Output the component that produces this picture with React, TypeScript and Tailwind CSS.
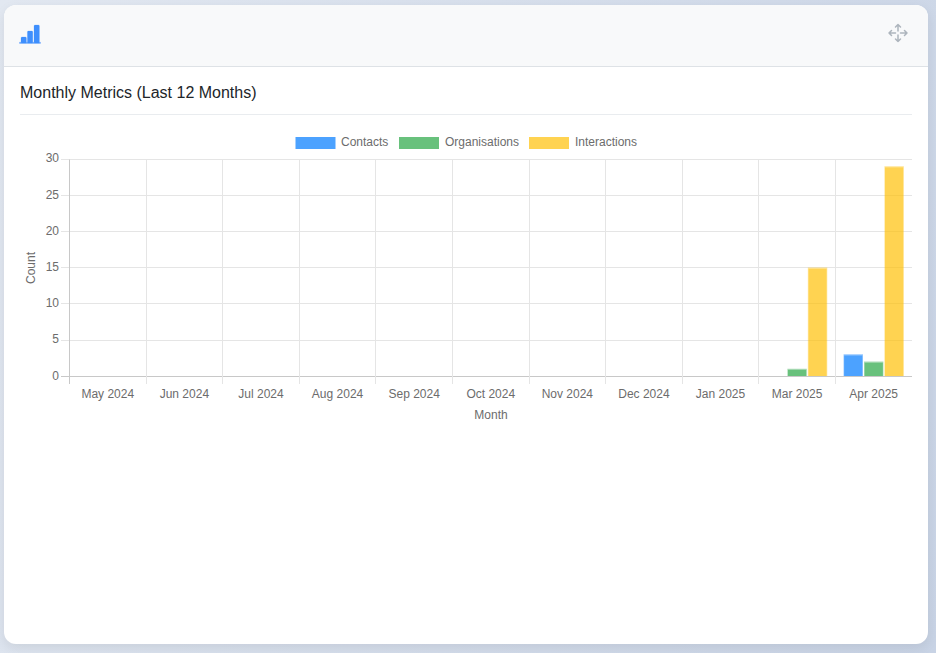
const months = ['May 2024', 'Jun 2024', 'Jul 2024', 'Aug 2024', 'Sep 2024', 'Oct 2024', 'Nov 2024', 'Dec 2024', 'Jan 2025', 'Mar 2025', 'Apr 2025'];
const series = [
  { name: 'Contacts', fill: 'rgba(0,123,255,0.7)', edge: 'rgba(0,123,255,0.45)', values: [0, 0, 0, 0, 0, 0, 0, 0, 0, 0, 3] },
  { name: 'Organisations', fill: 'rgba(40,167,69,0.7)', edge: 'rgba(40,167,69,0.42)', values: [0, 0, 0, 0, 0, 0, 0, 0, 0, 1, 2] },
  { name: 'Interactions', fill: 'rgba(255,193,7,0.7)', edge: 'rgba(255,193,7,0.42)', values: [0, 0, 0, 0, 0, 0, 0, 0, 0, 15, 29] },
];

const left = 69.5;
const right = 912;
const top = 159.5;
const bottom = 376.5;
const step = (right - left) / months.length;
const yFor = (v: number) => bottom - ((bottom - top) * v) / 30;
// gridlines snap to whole pixels a little above the true value
const gridY = (v: number) => Math.floor(top + (36.1 * (30 - v)) / 5) + 0.5;
const labelColor = '#6c6c6c';
const legend = [
  { x: 295.5, tx: 341 },
  { x: 399, tx: 445 },
  { x: 529, tx: 575 },
];

function MetricsChart() {
  return (
    <svg width="936" height="320" viewBox="0 120 936 320" className="-ml-5 mt-[5px] block font-['Liberation_Sans',sans-serif]">
      {series.map((s, i) => (
        <g key={s.name}>
          <rect x={legend[i].x} y={137} width={40} height={12} fill={s.fill} />
          <text x={legend[i].tx} y={146} fontSize={12} fill={labelColor}>{s.name}</text>
        </g>
      ))}
      {[0, 5, 10, 15, 20, 25, 30].map((v) => (
        <g key={v}>
          <line x1={61} x2={right} y1={gridY(v)} y2={gridY(v)} stroke={v === 0 ? '#c8c8c8' : '#e5e5e5'} />
          <text x={59} y={v === 30 ? 162 : v === 0 ? 380 : yFor(v) + 3} fontSize={12} fill={labelColor} textAnchor="end">{v}</text>
        </g>
      ))}
      {Array.from({ length: months.length }, (_, i) => {
        const x = Math.round(left + step * i - 0.5) + 0.5;
        return <line key={i} x1={x} x2={x} y1={top} y2={384} stroke={i === 0 ? '#c8c8c8' : '#e5e5e5'} />;
      })}
      {months.map((m, i) => (
        <text key={m} x={left + step * (i + 0.5)} y={398} fontSize={12} fill={labelColor} textAnchor="middle">{m}</text>
      ))}
      {series.map((s, si) =>
        s.values.map((v, i) => {
          if (!v) return null;
          const cx = left + step * (i + 0.5) + (si - 1) * 20.43;
          const y = yFor(v) - 0.5;
          return (
            <g key={s.name + i}>
              <rect x={cx - 9.7} y={y} width={19.4} height={1} fill={s.edge} />
              <rect x={cx - 9.7} y={y + 1} width={0.5} height={bottom - y - 1.5} fill={s.edge} />
              <rect x={cx + 9.2} y={y + 1} width={0.5} height={bottom - y - 1.5} fill={s.edge} />
              <rect x={cx - 9.2} y={y + 1} width={18.4} height={bottom - y - 1.5} fill={s.fill} />
            </g>
          );
        })
      )}
      <text x={491} y={419} fontSize={12} fill={labelColor} textAnchor="middle">Month</text>
      <text transform="translate(35 268) rotate(-90)" fontSize={12} fill={labelColor} textAnchor="middle">Count</text>
    </svg>
  );
}

export default function App() {
  return (
    <div className="h-[653px] w-[936px] overflow-hidden bg-[linear-gradient(110deg,#e2e8f1,#c8d3e5)] pl-1 pt-[5px] font-['Liberation_Sans',sans-serif]">
      <div className="h-[639px] w-[924px] overflow-hidden rounded-xl bg-white shadow-[0_4px_12px_rgba(0,0,0,0.08)]">
        <header className="flex h-[62px] items-center justify-between border-b border-[#dee2e6] bg-[#f8f9fa] pb-[5px] pl-[15px] pr-5">
          <svg width="22" height="21" viewBox="0 0 22 21" className="text-[#3f8ffd]" fill="currentColor" stroke="currentColor" strokeOpacity="0.3" strokeWidth="0.7">
            <rect x="2" y="14" width="5.4" height="6" rx="1" />
            <rect x="8.4" y="8" width="5.4" height="12" rx="1" />
            <rect x="15" y="2" width="5.4" height="18" rx="1" />
            <rect x="0.3" y="19.2" width="21.4" height="1.2" rx="0.5" fillOpacity="0.85" />
          </svg>
          <svg width="20" height="20" viewBox="0 0 20 20" fill="none" stroke="#adb5bd" strokeWidth="1.5" strokeLinecap="round" strokeLinejoin="round">
            <path d="M10 1.5v6.5M7.5 4 10 1.5 12.5 4" />
            <path d="M10 12v6.5M7.5 16 10 18.5 12.5 16" />
            <path d="M1 10h6.5M3.5 7.5 1 10l2.5 2.5" />
            <path d="M12.5 10H19M16.5 7.5 19 10l-2.5 2.5" />
          </svg>
        </header>
        <div className="px-4 pt-[15px]">
          <h2 className="border-b border-[#e9ecef] pb-[10px] text-base leading-[22px] text-[#212529]">Monthly Metrics (Last 12 Months)</h2>
          <MetricsChart />
        </div>
      </div>
    </div>
  );
}
